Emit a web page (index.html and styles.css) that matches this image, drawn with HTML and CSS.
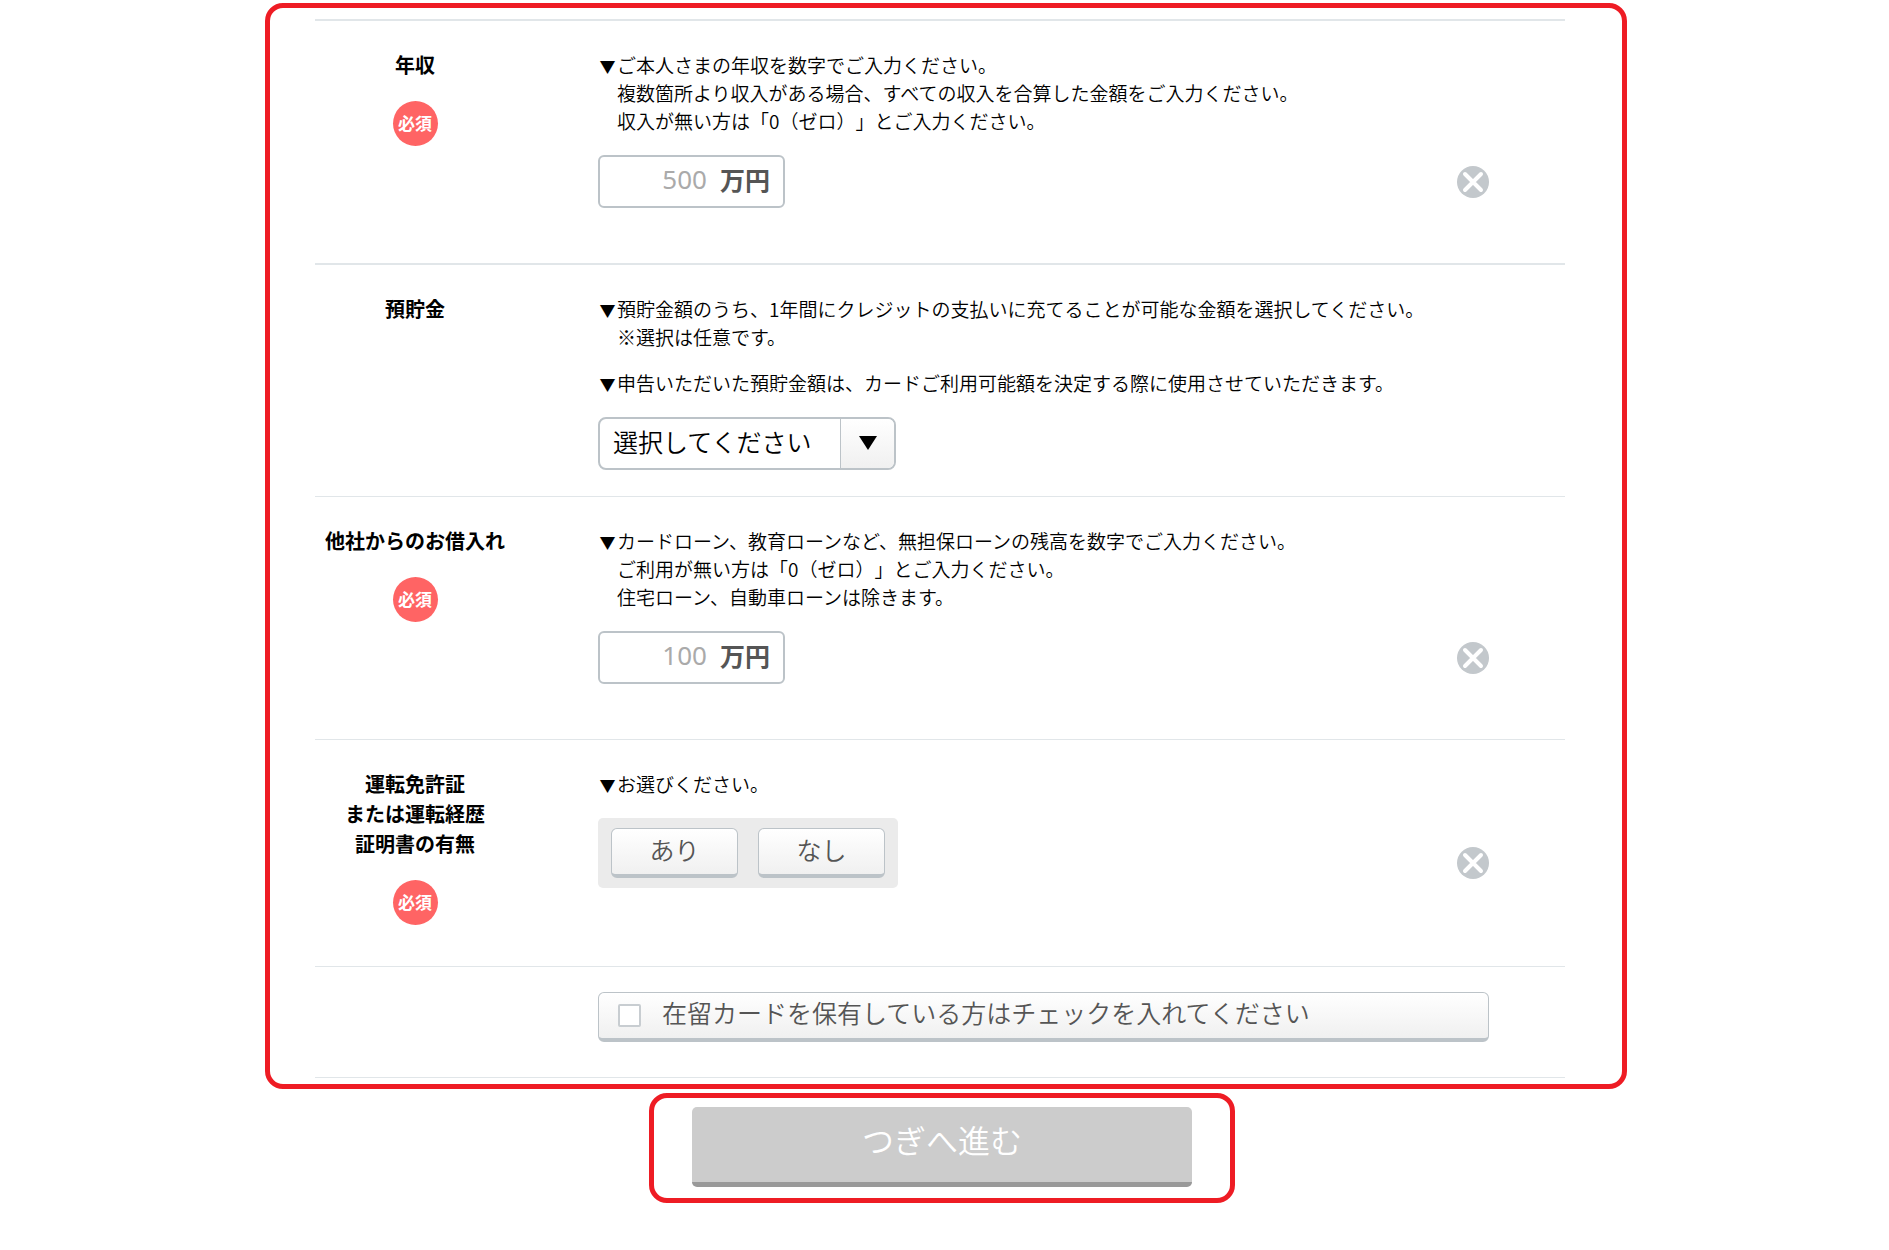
FILE: index.html
```html
<!DOCTYPE html>
<html lang="ja">
<head>
  <meta charset="UTF-8" />
  <title>お申し込み</title>
  <link rel="stylesheet" href="styles.css">
</head>

<body>
  <form class="entry-form">
    <div class="frame">
      <!-- Annual income -->
      <div class="form-row thick">
        <div class="row-head">
          <label for="income">年収</label>
          <span class="required">必須</span>
        </div>
        <div class="row-body">
          <p class="note"><span class="mark">▼</span>ご本人さまの年収を数字でご入力ください。<br>複数箇所より収入がある場合、すべての収入を合算した金額をご入力ください。<br>収入が無い方は「0（ゼロ）」とご入力ください。</p>
          <div class="field">
            <div class="money">
              <input type="text" id="income" inputmode="numeric" placeholder="500" />
              <span class="unit">万円</span>
            </div>
            <svg class="status" viewBox="0 0 32 32"><circle cx="16" cy="16" r="16" /><path d="M8 8L24 24M24 8L8 24" /></svg>
          </div>
        </div>
      </div>

      <!-- Savings -->
      <div class="form-row savings">
        <div class="row-head">
          <label for="savings">預貯金</label>
        </div>
        <div class="row-body">
          <p class="note"><span class="mark">▼</span>預貯金額のうち、1年間にクレジットの支払いに充てることが可能な金額を選択してください。<br>※選択は任意です。</p>
          <p class="note"><span class="mark">▼</span>申告いただいた預貯金額は、カードご利用可能額を決定する際に使用させていただきます。</p>
          <div class="field">
            <div class="select-box">
              <select id="savings">
                <option>選択してください</option>
              </select>
              <span class="arrow"><svg viewBox="0 0 18 14"><path d="M0 0H18L9 14Z" /></svg></span>
            </div>
          </div>
        </div>
      </div>

      <!-- Loans from other companies -->
      <div class="form-row">
        <div class="row-head">
          <label for="loans">他社からのお借入れ</label>
          <span class="required">必須</span>
        </div>
        <div class="row-body">
          <p class="note"><span class="mark">▼</span>カードローン、教育ローンなど、無担保ローンの残高を数字でご入力ください。<br>ご利用が無い方は「0（ゼロ）」とご入力ください。<br>住宅ローン、自動車ローンは除きます。</p>
          <div class="field">
            <div class="money">
              <input type="text" id="loans" inputmode="numeric" placeholder="100" />
              <span class="unit">万円</span>
            </div>
            <svg class="status" viewBox="0 0 32 32"><circle cx="16" cy="16" r="16" /><path d="M8 8L24 24M24 8L8 24" /></svg>
          </div>
        </div>
      </div>

      <!-- Driving licence -->
      <div class="form-row">
        <div class="row-head">
          <span id="licence">運転免許証<br>または運転経歴<br>証明書の有無</span>
          <span class="required">必須</span>
        </div>
        <div class="row-body">
          <p class="note"><span class="mark">▼</span>お選びください。</p>
          <div class="field tall">
            <div class="choices" role="group" aria-labelledby="licence">
              <button type="button" class="choice">あり</button>
              <button type="button" class="choice">なし</button>
            </div>
            <svg class="status" viewBox="0 0 32 32"><circle cx="16" cy="16" r="16" /><path d="M8 8L24 24M24 8L8 24" /></svg>
          </div>
        </div>
      </div>

      <!-- Residence card -->
      <div class="form-row residence">
        <label class="check-box" for="residence">
          <input type="checkbox" id="residence" />
          <span>在留カードを保有している方はチェックを入れてください</span>
        </label>
      </div>
    </div>

    <div class="submit-area">
      <div class="submit-frame">
        <button type="submit" class="next">つぎへ進む</button>
      </div>
    </div>
  </form>
</body>
</html>
```

FILE: styles.css
```css
* {
  margin: 0;
  padding: 0;
  box-sizing: border-box;
}

body {
  padding: 3px 0 40px 3px;
  background-color: #fff;
  color: #000;
  font-family: "Noto Sans CJK JP", sans-serif;
  font-size: 19px;
  font-weight: 350;
  line-height: 28px;
  text-spacing-trim: space-all;
}

input,
select,
button {
  font: inherit;
}

.entry-form {
  max-width: 1362px;
  margin: 0 auto;
}

/* Red outlines */
.frame,
.submit-frame {
  border: 5px solid #ee1c24;
  border-radius: 18px;
}

.frame {
  padding: 11px 57px 6px 45px;
}

/* Rows */
.form-row {
  display: grid;
  grid-template-columns: 200px 1fr;
  column-gap: 83px;
  padding-right: 76px;
  border-bottom: 1px solid #e1e6e9;
}

.form-row.thick {
  border-top: 2px solid #e1e6e9;
  border-bottom-width: 2px;
}

.row-head {
  display: flex;
  flex-direction: column;
  align-items: center;
  gap: 21px;
  padding-top: 29px;
  font-size: 20px;
  font-weight: bold;
  line-height: 30px;
  text-align: center;
}

.required {
  width: 45px;
  height: 45px;
  border-radius: 50%;
  background-color: #ff6464;
  color: #fff;
  font-size: 17px;
  line-height: 44px;
}

.row-body {
  padding: 30px 0 55px;
}

.savings .row-body {
  padding-bottom: 26px;
}

/* Hanging indent keeps the text clear of the triangle */
.note {
  padding-left: 19px;
  text-indent: -19px;
}

.note + .note {
  margin-top: 18px;
}

.mark {
  display: inline-block;
  width: 19px;
  font-size: 16px;
  line-height: 20px;
  text-align: center;
  text-indent: 0;
}

.field {
  display: flex;
  align-items: center;
  justify-content: space-between;
  margin-top: 20px;
}

.field.tall {
  height: 90px;
  margin-bottom: 3px;
}

.status {
  width: 32px;
  height: 32px;
}

.status circle {
  fill: #c3c8cc;
}

.status path {
  fill: none;
  stroke: #fff;
  stroke-width: 4;
  stroke-linecap: round;
}

/* Amount box */
.money {
  display: flex;
  align-items: center;
  gap: 13px;
  width: 187px;
  height: 53px;
  padding: 0 13px 6px 12px;
  border: 2px solid #bcc3c8;
  border-radius: 6px;
  font-size: 25px;
}

.money input {
  flex: 1;
  min-width: 0;
  border: none;
  outline: none;
  background: none;
  font-family: "Noto Sans", sans-serif;
  font-size: 26px;
  font-weight: 400;
  text-align: right;
}

.money input::placeholder {
  color: #aaa;
}

.unit {
  color: #555;
  font-weight: bold;
}

/* Drop-down */
.select-box {
  display: grid;
  grid-template-columns: 1fr 54px;
  width: 298px;
  height: 53px;
  border: 2px solid #bcc3c8;
  border-radius: 8px;
  overflow: hidden;
}

.select-box select {
  grid-area: 1 / 1 / 2 / 3;
  padding: 0 54px 6px 13px;
  border: none;
  outline: none;
  background: none;
  color: #000;
  font-size: 25px;
  appearance: none;
}

.arrow {
  grid-area: 1 / 2;
  display: flex;
  align-items: center;
  justify-content: center;
  padding-bottom: 2px;
  border-left: 1px solid #bcc3c8;
  background: linear-gradient(#fff, #f0f0f0);
  pointer-events: none;
}

.arrow svg {
  width: 18px;
  height: 14px;
}

/* Choice buttons */
.choices {
  display: flex;
  align-self: flex-start;
  gap: 20px;
  padding: 10px 13px;
  border-radius: 5px;
  background-color: #ebebeb;
}

.choice,
.check-box {
  height: 50px;
  border: 1px solid #bcc3c8;
  border-bottom-width: 4px;
  border-radius: 6px;
  background: linear-gradient(#fff, #f0f0f0);
  color: #555;
  font-size: 25px;
}

.choice {
  width: 127px;
  padding-bottom: 6px;
  cursor: pointer;
}

/* Residence card */
.residence {
  padding-top: 25px;
  padding-bottom: 35px;
}

.check-box {
  grid-column: 2;
  display: flex;
  align-items: center;
  gap: 21px;
  padding-left: 19px;
}

.check-box input {
  width: 23px;
  height: 23px;
  border: 2px solid #c8cdd1;
  border-radius: 2px;
  background-color: #fff;
  appearance: none;
}

.check-box input:checked {
  background-color: #bcc3c8;
}

.check-box span {
  padding-bottom: 8px;
}

/* Next button */
.submit-area {
  display: flex;
  justify-content: center;
  margin-top: 4px;
  padding-right: 8px;
}

.submit-frame {
  padding: 9px 38px 11px;
}

.next {
  display: block;
  width: 500px;
  height: 80px;
  padding-bottom: 12px;
  border: none;
  border-bottom: 5px solid #999;
  border-radius: 5px;
  background-color: #ccc;
  color: #fff;
  font-size: 32px;
  cursor: pointer;
}
```
